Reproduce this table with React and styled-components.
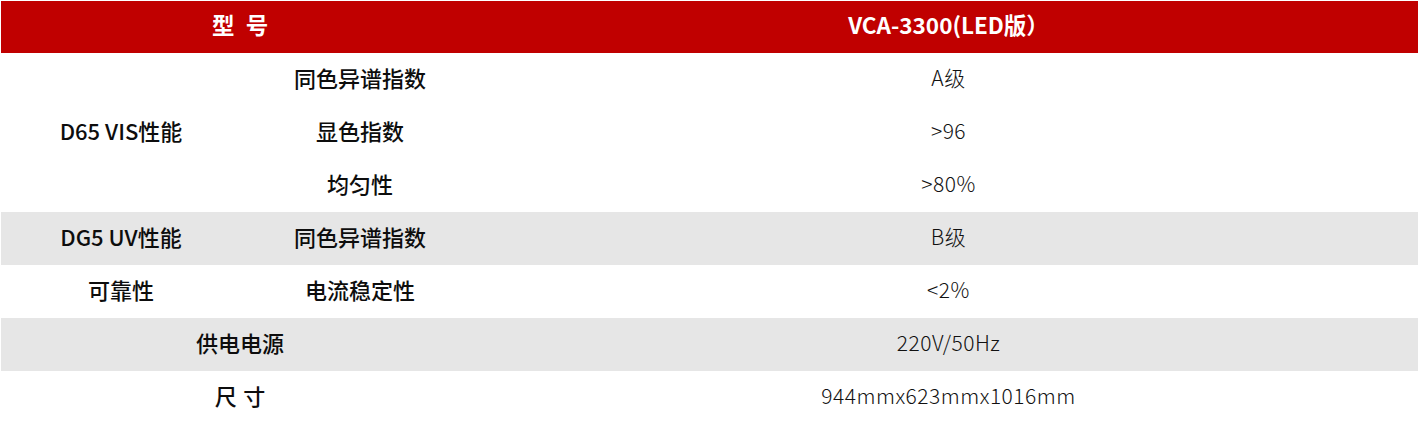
import React from "react";
import styled, { createGlobalStyle } from "styled-components";

const GlobalStyle = createGlobalStyle`
    html, body {
        margin: 0;
        padding: 0;
        background: #fff;
    }
    body {
        font-family: "Noto Sans CJK SC", "Noto Sans", sans-serif;
    }
`;

const Wrap = styled.div`
    padding: 1px;
    width: 1417px;
`;

const SpecTable = styled.table`
    width: 1417px;
    table-layout: fixed;
    border-collapse: collapse;
    border-spacing: 0;
`;

const Row = styled.tr`
    height: ${props => (props.head ? "52px" : "53px")};
    background: ${props => (props.head ? "#c00000" : props.shade ? "#e6e6e6" : "#ffffff")};
`;

const HeadCell = styled.th`
    padding: 0 0 5px ${props => props.spread || "0"};
    text-align: center;
    vertical-align: middle;
    color: #ffffff;
    font-size: 22.5px;
    line-height: 1;
    font-weight: 700;
    letter-spacing: ${props => props.spread || "0"};
`;

const Label = styled.td`
    padding: 0 0 5px ${props => props.spread || "0"};
    text-align: center;
    vertical-align: middle;
    color: #0d0d0d;
    font-size: 22px;
    line-height: 1;
    font-weight: 500;
    letter-spacing: ${props => props.spread || "0"};
`;

const Value = styled.td`
    padding: 0 0 5px;
    text-align: center;
    vertical-align: middle;
    color: #111;
    font-size: 21px;
    line-height: 1;
    font-weight: 300;
    letter-spacing: 0.5px;
`;

const App = () => {
    return (
        <Wrap>
            <GlobalStyle />
            <SpecTable>
                <colgroup>
                    <col style={{ width: "240px" }} />
                    <col style={{ width: "238px" }} />
                    <col />
                </colgroup>
                <tbody>
                    <Row head>
                        <HeadCell colSpan={2} spread="0.5em">型号</HeadCell>
                        <HeadCell>VCA-3300(LED版）</HeadCell>
                    </Row>
                    <Row>
                        <Label rowSpan={3}>D65 VIS性能</Label>
                        <Label>同色异谱指数</Label>
                        <Value>A级</Value>
                    </Row>
                    <Row>
                        <Label>显色指数</Label>
                        <Value>&gt;96</Value>
                    </Row>
                    <Row>
                        <Label>均匀性</Label>
                        <Value>&gt;80%</Value>
                    </Row>
                    <Row shade>
                        <Label>DG5 UV性能</Label>
                        <Label>同色异谱指数</Label>
                        <Value>B级</Value>
                    </Row>
                    <Row>
                        <Label>可靠性</Label>
                        <Label>电流稳定性</Label>
                        <Value>&lt;2%</Value>
                    </Row>
                    <Row shade>
                        <Label colSpan={2}>供电电源</Label>
                        <Value>220V/50Hz</Value>
                    </Row>
                    <Row>
                        <Label colSpan={2} spread="0.3em">尺寸</Label>
                        <Value>944mmx623mmx1016mm</Value>
                    </Row>
                </tbody>
            </SpecTable>
        </Wrap>
    );
};

export default App;
